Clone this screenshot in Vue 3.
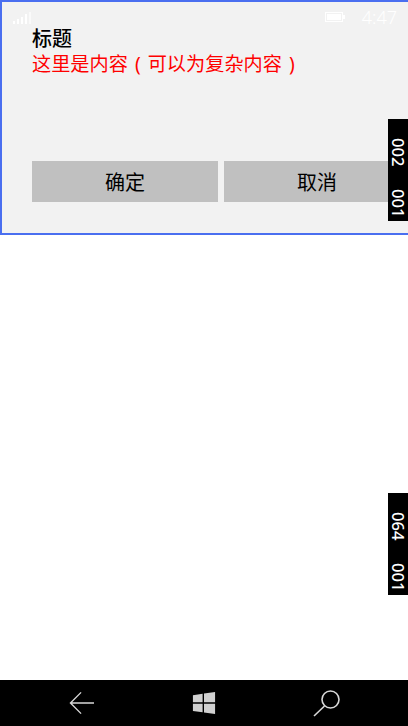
<script setup>
const badges = [
  { id: 'a', top: 119, first: '002', second: '001' },
  { id: 'b', top: 493, first: '064', second: '001' }
]
</script>

<template>
  <div class="page">
    <section class="dialog">
      <div class="status">
        <svg class="signal" width="18" height="12" viewBox="0 0 18 12">
          <rect x="0" y="9" width="2" height="3" />
          <rect x="4" y="7" width="2" height="5" />
          <rect x="8" y="5" width="2" height="7" />
          <rect x="12" y="2" width="2" height="10" />
          <rect x="16" y="0" width="2" height="12" opacity=".6" />
        </svg>
        <div class="status-right">
          <svg width="20" height="10" viewBox="0 0 20 10">
            <rect x="0.5" y="0.5" width="17" height="9" fill="none" stroke="#fff" />
            <rect x="2" y="2" width="14" height="6" fill="#fff" />
            <rect x="18" y="3" width="2" height="4" fill="#fff" />
          </svg>
          <span class="time">4:47</span>
        </div>
      </div>
      <h1 class="title">标题</h1>
      <p class="content">这里是内容 ( 可以为复杂内容 )</p>
      <div class="actions">
        <button class="btn" type="button">确定</button>
        <button class="btn" type="button">取消</button>
      </div>
    </section>

    <main class="body"></main>

    <nav class="nav">
      <svg width="26" height="24" viewBox="0 0 28 26" fill="none" stroke="#d8d8d8" stroke-width="1.5">
        <path d="M27 13H2M13 1.5L1.5 13L13 24.5" />
      </svg>
      <svg width="24" height="24" viewBox="0 0 26 26" fill="#d0d0d0">
        <path d="M1 4.5L11.5 3V12.3H1ZM13 2.8L25 1V12.3H13ZM1 13.8H11.5V23L1 21.6ZM13 13.8H25V25L13 23.2Z" />
      </svg>
      <svg width="27" height="27" viewBox="0 0 27 27" fill="none" stroke="#d8d8d8" stroke-width="1.6">
        <circle cx="17.5" cy="9.5" r="8.5" />
        <path d="M11.5 16L1 26" />
      </svg>
    </nav>

    <aside v-for="b in badges" :key="b.id" class="badge" :style="{ top: b.top + 'px' }">
      <span>{{ b.first }}</span>
      <span>{{ b.second }}</span>
    </aside>
  </div>
</template>

<style scoped>
.page {
  position: relative;
  width: 408px;
  height: 726px;
  display: flex;
  flex-direction: column;
  overflow: hidden;
  background: #fff;
  font-family: "Noto Sans", "Noto Sans CJK SC", sans-serif;
}
.dialog {
  position: relative;
  height: 235px;
  box-sizing: border-box;
  padding: 24px 0 0 30px;
  background: #f2f2f2;
  border: 2px solid #4a6ff0;
  border-width: 2px 0 2px 2px;
  overflow: hidden;
  flex: none;
}
.status {
  position: absolute;
  top: 6px;
  left: 11px;
  right: 11px;
  display: flex;
  justify-content: space-between;
  align-items: center;
  height: 18px;
}
.signal { fill: #fff; margin-top: 2px; }
.status-right {
  display: flex;
  align-items: center;
  gap: 17px;
}
.time {
  color: #fff;
  font-size: 18px;
  font-weight: 300;
  line-height: 18px;
}
.title {
  margin: 0;
  font-size: 20px;
  font-weight: 500;
  line-height: 25px;
  color: #000;
}
.content {
  margin: 0;
  font-size: 19.2px;
  word-spacing: 2px;
  line-height: 25px;
  color: #f00;
  white-space: nowrap;
}
.actions {
  display: flex;
  gap: 6px;
  margin-top: 85px;
}
.btn {
  flex: none;
  width: 186px;
  height: 41px;
  padding: 0;
  border: 0;
  background: #c0c0c0;
  color: #000;
  font: inherit;
  font-size: 20px;
}
.body { flex: 1; }
.nav {
  flex: none;
  height: 46px;
  background: #000;
  display: flex;
  align-items: center;
  justify-content: space-between;
  padding: 0 68px 0 69px;
}
.badge {
  position: absolute;
  right: 0;
  width: 20px;
  height: 102px;
  box-sizing: border-box;
  padding: 19px 0 0;
  background: #000;
  color: #fff;
  writing-mode: vertical-rl;
  display: flex;
  justify-content: flex-start;
  align-items: center;
  gap: 23px;
  font-family: "Noto Sans", sans-serif;
  font-weight: 500;
  font-size: 16.5px;
  line-height: 16px;
}
</style>
